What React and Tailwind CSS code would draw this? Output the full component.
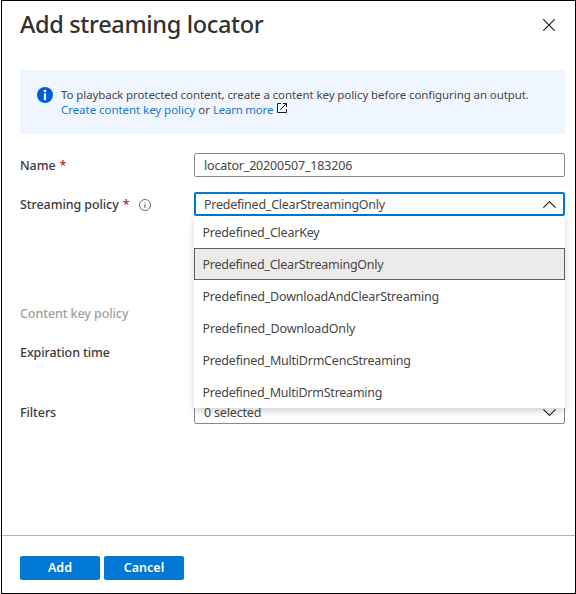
const policies = [
  { name: 'Predefined_ClearKey', track: 'tracking-[-0.22px]' },
  { name: 'Predefined_ClearStreamingOnly', track: 'tracking-[-0.24px]' },
  { name: 'Predefined_DownloadAndClearStreaming', track: 'tracking-[-0.2px]' },
  { name: 'Predefined_DownloadOnly', track: 'tracking-[-0.16px]' },
  { name: 'Predefined_MultiDrmCencStreaming', track: 'tracking-[-0.22px]' },
  { name: 'Predefined_MultiDrmStreaming', track: 'tracking-[-0.24px]' },
];
const selected = 'Predefined_ClearStreamingOnly';

function Chevron({ up }) {
  return (
    <svg width="13" height="7" viewBox="0 0 13 7" fill="none" stroke="#1b1a19" strokeWidth="1.1" className="shrink-0">
      <path d={up ? 'M0.4 6.6 6.5 0.6l6.1 6' : 'M0.4 0.4 6.5 6.4l6.1-6'} />
    </svg>
  );
}

function Label({ children, required, muted, className = '' }) {
  return (
    <div className={`flex w-[174px] shrink-0 items-center pt-0.5 font-medium tracking-[-0.08px] whitespace-pre ${muted ? 'text-[#a19f9d]' : 'text-[#3b3a39]'} ${className}`}>
      <span>{children}</span>
      {required && <span className="ml-1 text-[#a4262c]">*</span>}
    </div>
  );
}

export default function App() {
  return (
    <div className="relative flex h-[594px] w-[576px] flex-col overflow-hidden bg-white font-['Noto_Sans',sans-serif] text-[12.5px] leading-4 text-[#484644]">
      <div className="pointer-events-none absolute inset-y-0 right-0 left-px z-20 border border-black" />

      <header className="flex h-[70px] shrink-0 items-start justify-between pt-2 pr-[21px] pl-5">
        <h1 className="text-[23.5px] leading-8 font-medium tracking-[-0.34px] text-[#323130]">Add streaming locator</h1>
        <svg width="12" height="12" viewBox="0 0 12 12" stroke="#1b1a19" strokeWidth="1.1" className="mt-[11px]">
          <path d="M0.3 0.3 11.7 11.7M11.7 0.3 0.3 11.7" />
        </svg>
      </header>

      <section className="mr-[11px] ml-5 flex h-16 shrink-0 rounded-[2px] bg-[#f0f6ff] pt-[17px] pl-[17px]">
        <svg width="16" height="16" viewBox="0 0 16 16" className="shrink-0">
          <circle cx="8" cy="8" r="8" fill="#015cda" />
          <circle cx="8" cy="4" r="1.35" fill="#fff" />
          <rect x="6.9" y="6.2" width="2.2" height="7" rx="0.6" fill="#fff" />
        </svg>
        <div className="ml-2 text-[11.5px] leading-[15px] whitespace-nowrap">
          <p className="tracking-[-0.085px]">To playback protected content, create a content key policy before configuring an output.</p>
          <p className="flex">
            <a className="tracking-[-0.05px] text-[#1a76c6]">Create content key policy</a>
            <span className="mx-[3px]">or</span>
            <a className="tracking-[-0.23px] text-[#1a76c6]">Learn more</a>
            <svg width="10" height="10" viewBox="0 0 10 10" fill="none" stroke="#1b1a19" className="mt-px ml-1">
              <path d="M4 0.5H0.5v9h9V6M6 0.5h3.5V4M9.5 0.5 3.2 6.8" />
            </svg>
          </p>
        </div>
      </section>

      <main className="flex grow flex-col pt-[19px] pr-[11px] pl-5">
        <div className="flex h-6">
          <Label required>Name</Label>
          <div className="flex grow items-center rounded-[2px] border border-[#8a8886] pt-0.5 pl-[9px] tracking-[-0.18px]">locator_20200507_183206</div>
        </div>

        <div className="relative mt-[15px] flex h-6">
          <Label required>Streaming policy</Label>
          <svg width="12" height="12" viewBox="0 0 12 12" fill="none" stroke="#605e5c" className="absolute top-[7px] left-[119px]">
            <circle cx="6" cy="6" r="5.5" strokeWidth="0.9" />
            <path d="M6 5v4M6 3v1" />
          </svg>
          <div className="flex grow items-center justify-between rounded-[2px] border-2 border-[#0078d4] pr-[7px] pl-2">
            <span className="pt-0.5 tracking-[-0.24px]">{selected}</span>
            <Chevron up />
          </div>
          <ul className="absolute top-6 right-0 left-[174px] z-10 bg-white shadow-[0_3px_7px_rgba(0,0,0,0.18)]">
            {policies.map(({ name, track }) => (
              <li
                key={name}
                className={`flex h-8 items-center border pt-0.5 pl-[7.5px] ${track} ${name === selected ? 'border-[#605e5c] bg-[#edebe9]' : 'border-transparent'}`}
              >
                {name}
              </li>
            ))}
          </ul>
        </div>

        <Label muted className="mt-[85px] h-6">Content key policy</Label>
        <Label className="mt-[15px] h-6">Expiration time</Label>
        <div className="mt-9 flex h-6">
          <Label>Filters</Label>
          <div className="flex grow items-center justify-between rounded-[2px] border border-[#8a8886] pr-2 pl-[9px]">
            <span className="pt-0.5 tracking-[-0.18px]">0 selected</span>
            <Chevron />
          </div>
        </div>
      </main>

      <footer className="flex h-[59px] shrink-0 gap-1 border-t border-[#b3b0ad] pt-5 pl-5 text-white">
        <button className="h-6 w-20 rounded-[2px] bg-[#0078d4] font-semibold">Add</button>
        <button className="h-6 w-20 rounded-[2px] bg-[#0078d4] font-semibold">Cancel</button>
      </footer>
    </div>
  );
}
